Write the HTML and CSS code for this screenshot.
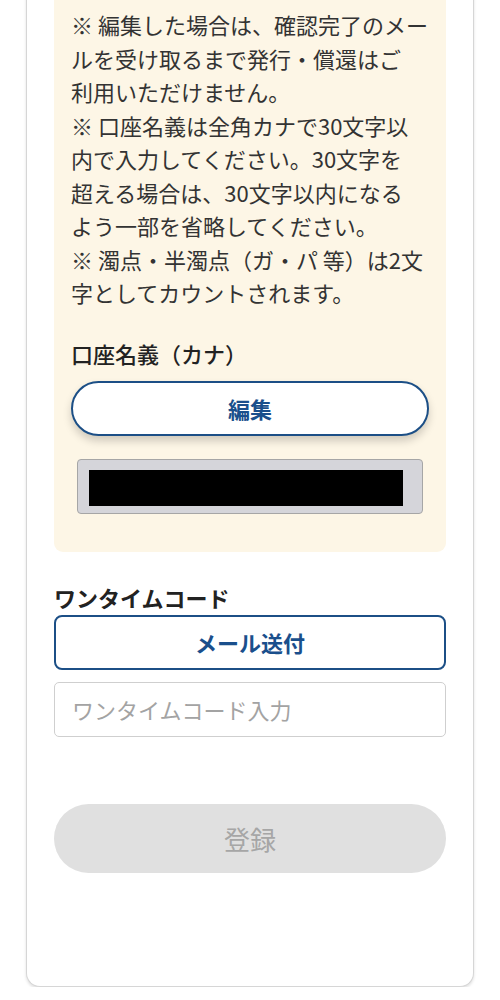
FILE: index.html
```html
<!DOCTYPE html>
<html lang="ja">
<head>
<meta charset="utf-8">
<title>口座名義</title>
<link rel="stylesheet" href="styles.css">
</head>
<body>
<div class="card">
  <section class="notice">
    <p class="notes">※ 編集した場合は、確認完了のメー<br>ルを受け取るまで発行・償還はご<br>利用いただけません。<br>※ 口座名義は全角カナで30文字以<br>内で入力してください。30文字を<br>超える場合は、30文字以内になる<br>よう一部を省略してください。<br>※ 濁点・半濁点（ガ・パ 等）は2文<br>字としてカウントされます。</p>
    <h2 class="field-title">口座名義（カナ）</h2>
    <button class="btn-edit" type="button">編集</button>
    <div class="masked-field"><div class="mask"></div></div>
  </section>
  <section class="otp">
    <h2 class="otp-title">ワンタイムコード</h2>
    <button class="btn-mail" type="button">メール送付</button>
    <input class="otp-input" type="text" placeholder="ワンタイムコード入力">
    <button class="btn-submit" type="button" disabled>登録</button>
  </section>
</div>
</body>
</html>
```
FILE: styles.css
```css
* { box-sizing: border-box; }
html, body { margin: 0; padding: 0; background: #fff; }
body {
  font-family: "Noto Sans CJK JP", "Noto Sans", sans-serif;
  color: #333;
  width: 500px;
  overflow: hidden;
}
.card {
  margin: -20px 26px 0;
  border: 1px solid #d6d6d6;
  border-top: none;
  border-radius: 0 0 14px 14px;
  box-shadow: 0 2px 3px rgba(0,0,0,0.12);
  padding: 0 27px 113px;
  background: #fff;
}
.notice {
  background: #fdf6e6;
  border-radius: 0 0 9px 9px;
  padding: 28px 17px 38px;
}
.notes {
  margin: 0;
  font-size: 22px;
  line-height: 33.5px;
  white-space: nowrap;
  color: #333;
}
.field-title {
  margin: 28px 0 13px;
  font-size: 22px;
  line-height: 30px;
  font-weight: 500;
  color: #222;
}
.btn-edit {
  display: block;
  width: 100%;
  height: 55px;
  border: 2.5px solid #1c4f86;
  border-radius: 28px;
  background: #fff;
  box-shadow: 0 5px 9px rgba(0,0,0,0.18);
  font-family: inherit;
  font-size: 22px;
  font-weight: 700;
  color: #1a4f8c;
  padding: 0;
}
.masked-field {
  margin: 23px 6px 0;
  height: 55px;
  background: #d5d5da;
  border: 1px solid #a6a6a6;
  border-radius: 4px;
  padding: 10px 19px 0 11px;
}
.mask {
  height: 36px;
  background: #000;
}
.otp-title {
  margin: 30px 0 3px;
  font-size: 22px;
  line-height: 30px;
  font-weight: 700;
  color: #222;
}
.btn-mail {
  display: block;
  width: 100%;
  height: 55px;
  border: 2.5px solid #1c4f86;
  border-radius: 8px;
  background: #fff;
  font-family: inherit;
  font-size: 22px;
  font-weight: 700;
  color: #1a4f8c;
  padding: 0;
}
.otp-input {
  display: block;
  width: 100%;
  height: 55px;
  margin-top: 12px;
  border: 1px solid #cfcfcf;
  border-radius: 5px;
  padding: 0 17px;
  font-family: inherit;
  font-size: 22px;
  color: #333;
  background: #fff;
  outline: none;
}
.otp-input::placeholder { color: #a3a3a3; }
.btn-submit {
  display: block;
  width: 100%;
  height: 69px;
  margin-top: 67px;
  border: none;
  border-radius: 35px;
  background: #e0e0e0;
  font-family: inherit;
  font-size: 26px;
  color: #a6a6a6;
  padding: 0;
}
```
